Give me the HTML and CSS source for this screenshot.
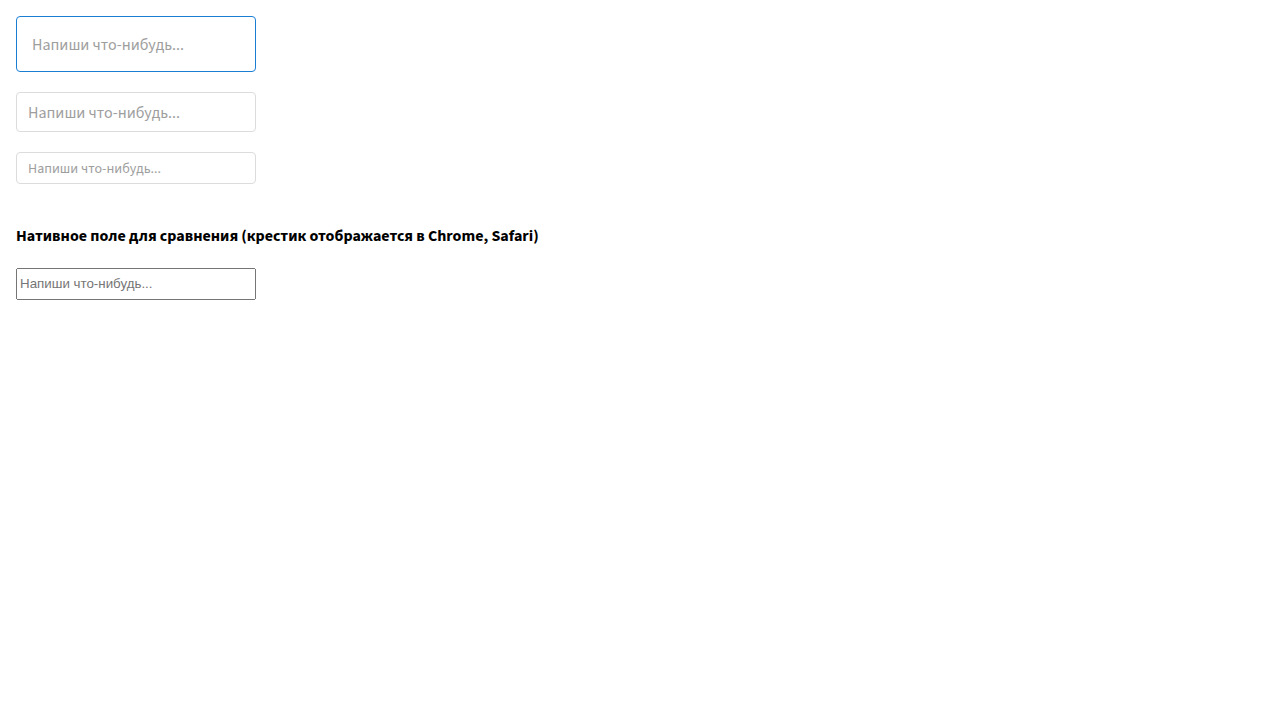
FILE: index.html
```html
<!DOCTYPE html>
<html><head><meta charset="utf-8"><link rel="stylesheet" href="styles.css"></head>
<body>
<main class="page">
  <div class="fields">
    <input class="field field-lg" type="search" placeholder="Напиши что-нибудь...">
    <input class="field field-md" type="search" placeholder="Напиши что-нибудь...">
    <input class="field field-sm" type="search" placeholder="Напиши что-нибудь...">
  </div>
  <h3 class="title">Нативное поле для сравнения (крестик отображается в Chrome, Safari)</h3>
  <input class="native" type="search" placeholder="Напиши что-нибудь...">
</main>
</body></html>
```
FILE: styles.css
```css
html,body{margin:0;padding:0;background:#fff}
body{font-family:"Source Sans 3","Source Sans Pro",sans-serif;color:#000}
.page{padding:16px;display:flex;flex-direction:column;align-items:flex-start}
.fields{display:flex;flex-direction:column;gap:20px}
.field{
  -webkit-appearance:none;appearance:none;
  box-sizing:border-box;width:240px;margin:0;
  font-family:"Source Sans 3","Source Sans Pro",sans-serif;
  color:#333;background:#fff;
  border:1px solid #dcdcdc;border-radius:4px;outline:none;
}
.field::placeholder{color:#9e9e9e}
.field::-webkit-search-cancel-button{-webkit-appearance:none}
.field-lg{height:56px;padding:2px 15px 0;font-size:16px;border-color:#1a7fd4}
.field-md{height:40px;padding:2px 11px 0;font-size:16px}
.field-sm{height:32px;padding:2px 11px 0;font-size:14px}
.title{margin:42px 0 0;font-size:16px;font-weight:700;line-height:20px}
.native{margin-top:22px;width:240px;height:32px;box-sizing:border-box;padding:0 2px 2px}
```
